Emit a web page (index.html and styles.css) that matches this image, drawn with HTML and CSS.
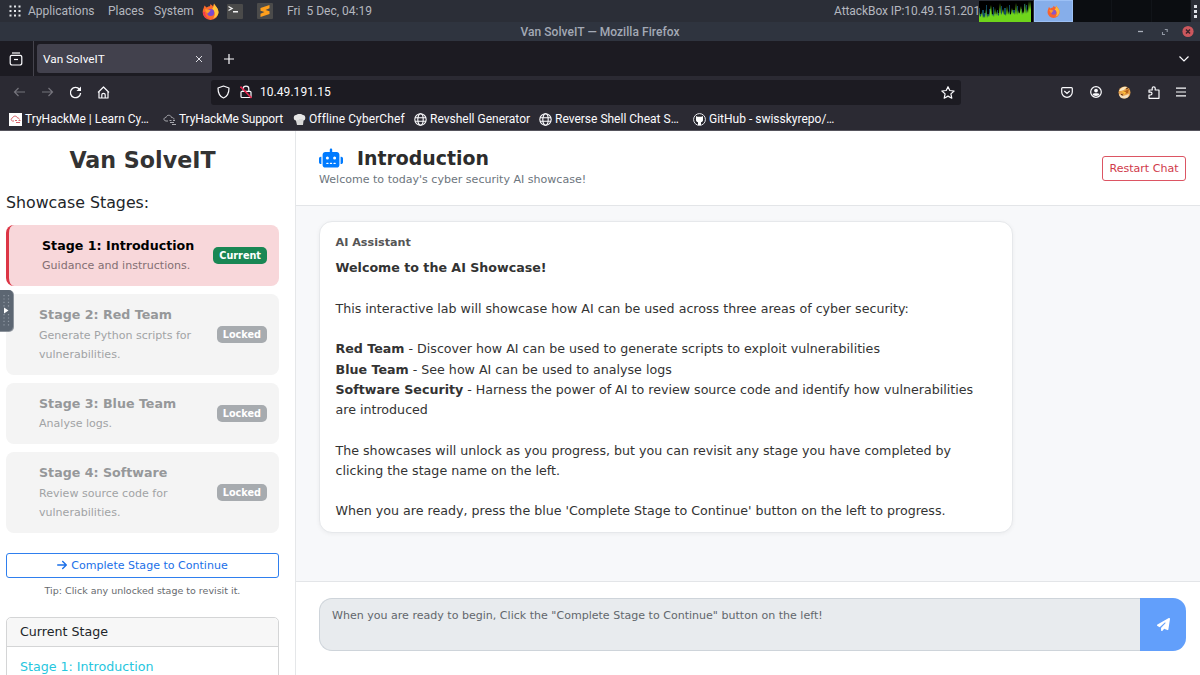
FILE: index.html
```html
<!DOCTYPE html>
<html lang="en">
  <head>
    <title>Van SolveIT</title>
    <meta charset="UTF-8">
    <meta name="viewport" content="width=device-width, initial-scale=1.0">
    <link rel="stylesheet" href="styles.css">
  </head>
  <body>

    <!-- desktop panel -->
    <div class="panel">
      <svg class="apps" width="12" height="12" viewBox="0 0 12 12" fill="#e4e6ea">
        <path d="M.5 .5h2v2h-2zM5 .5h2v2h-2zM9.500 .5h2v2h-2zM.5 5h2v2h-2zM5 5h2v2h-2zM9.500 5h2v2h-2zM.5 9.500h2v2h-2zM5 9.500h2v2h-2zM9.500 9.500h2v2h-2z"/>
      </svg>
      <span class="menu menu-apps">Applications</span>
      <span class="menu menu-places">Places</span>
      <span class="menu menu-system">System</span>
      <svg class="launch-fox" width="17" height="17" viewBox="0 0 17 17">
        <path d="M1.500 5.500L2.500 2.500 4.500 4.500C6 3.500 7 3.200 8 3.200L8.500 1C9.500 2 10.500 2.500 11 3.500L12 .5C13 3 16.500 5 16.500 9.500A7.800 7.300 0 0 1 .7 9.500C.7 8 1 6.500 1.500 5.500z" fill="#fb6a2c"/>
        <path d="M12 .5C13 3 16.500 5 16.500 9.500C16 13 13 15 11 15.500C14 12 13 8 10 6C11.500 4.500 12 2.500 12 .5z" fill="#ffc53a"/>
        <path d="M1 9c0 5 4 7.500 8 7.300C5 15.500 3 13 3 9z" fill="#f23a4e"/>
        <circle cx="8.700" cy="9.500" r="3.500" fill="#7a4ad0"/>
        <path d="M3 6.500C5 5.500 6 7 8.500 7.200 8.500 8.700 6.500 8.500 6 10.500 4.500 10 3.500 8.500 3 6.500z" fill="#ff9a2a"/>
      </svg>
      <svg class="launch-term" width="16" height="15" viewBox="0 0 16 15">
        <rect width="16" height="15" rx="1" fill="#4a4a4a"/>
        <path d="M1.500 2.500l3.500 2-3.500 2M6 7.800h5" fill="none" stroke="#f2f2f2" stroke-width="1.400"/>
      </svg>
      <svg class="launch-subl" width="16" height="16" viewBox="0 0 16 16">
        <rect width="16" height="16" rx="1" fill="#4b4b4b"/>
        <path d="M3.500 5l9-3v3.300L8.500 7l4 1.300V11l-9 3v-3.300L7.500 9l-4-1.300z" fill="#ff9f1c"/>
      </svg>
      <span class="menu menu-date">Fri&nbsp; 5 Dec, 04:19</span>
      <span class="menu menu-ip">AttackBox IP:10.49.151.201</span>
      <svg class="cpu" width="54" height="21" viewBox="0 0 54 21">
        <rect width="54" height="21" fill="#000"/>
        <path d="M0 21V7h1v6h2V9h2v3h2V4h1v9h2V8h2v5h2V6h1v7h3V9h1v3h3V5h1v8h2V7h2v6h3V4h1v9h2V9h3v4h2V5h1v7h3V8h1v4h2V3h1v9h1V4h1v17z" fill="#124a63"/>
        <path d="M0 21V11l1 5 1-1 1-4 1 6 1-2 1 2 1-9 1 9 1-3 1 2 1-5 1-7 1 11 1-2 1 3 1-9 1 8 1-5 1 5 1-1 1-12 1 12 1-2 1-4 1 6 1-1 1 2 1-10 1 9 1-4 1 4 1-1 1-6 1 6 1-2 1 3 1-12 1 12 1-5 1 4 1-2 1-6 1 9 1-4 1 3 1-11 1 11 1-5 1 4 1-12 1 9 1-9V21z" fill="#6fd51b"/>
      </svg>
      <div class="task">
        <svg width="13" height="13" viewBox="0 0 17 17">
          <path d="M1.500 5.500L2.500 2.500 4.500 4.500C6 3.500 7 3.200 8 3.200L8.500 1C9.500 2 10.500 2.500 11 3.500L12 .5C13 3 16.500 5 16.500 9.500A7.800 7.300 0 0 1 .7 9.500C.7 8 1 6.500 1.500 5.500z" fill="#f8622f"/>
          <path d="M12 .5C13 3 16.500 5 16.500 9.500C16 13 13 15 11 15.500C14 12 13 8 10 6C11.500 4.500 12 2.500 12 .5z" fill="#ffb83a"/>
          <circle cx="8.700" cy="9.500" r="3.300" fill="#8a55c8"/>
          <path d="M3 6.500C5 5.500 6 7 8.500 7.200 8.500 8.700 6.500 8.500 6 10.500 4.500 10 3.500 8.500 3 6.500z" fill="#ff9a2a"/>
        </svg>
      </div>
      <div class="workspaces"><i></i><i></i><i></i></div>
      <div class="dots"><i></i><i></i><i></i></div>
    </div>

    <!-- window title -->
    <div class="titlebar">
      <span></span>
      <span class="wtitle">Van SolveIT — Mozilla Firefox</span>
      <svg width="60" height="12" viewBox="0 0 60 12">
        <path d="M-2 5.500h5" stroke="#aab0bb" stroke-width="1.300"/>
        <path d="M22.500 6v2.500H25M24.800 3.500h2.400V6" fill="none" stroke="#9299a5" stroke-width="1.100"/>
        <circle cx="48" cy="5.500" r="5.600" fill="#cc575d"/>
        <path d="M46 3.500l4 4M50 3.500l-4 4" stroke="#3a2329" stroke-width="1.500"/>
      </svg>
    </div>

    <!-- tabs -->
    <div class="tabbar">
      <div class="tabview">
        <svg width="14" height="14" viewBox="0 0 14 14" fill="none" stroke="#fbfbfe" stroke-width="1.200">
          <path d="M3 1h8"/>
          <path d="M1.200 5.500c0-1.500.5-2.200 1.500-2.200h8.600c1 0 1.500.7 1.500 2.200V11c0 1.300-.7 2-2 2H3.200c-1.300 0-2-.7-2-2z"/>
          <path d="M5 7.500h4"/>
        </svg>
      </div>
      <div class="tab">
        <span>Van SolveIT</span>
        <svg width="8" height="8" viewBox="0 0 8 8" stroke="#dcdce2" stroke-width="1"><path d="M1 1l6 6M7 1L1 7"/></svg>
      </div>
      <svg class="newtab" width="10" height="10" viewBox="0 0 10 10" stroke="#fbfbfe" stroke-width="1.200"><path d="M5 0v10M0 5h10"/></svg>
      <svg class="alltabs" width="10" height="6" viewBox="0 0 10 6" fill="none" stroke="#fbfbfe" stroke-width="1.200"><path d="M.5.5L5 5 9.500.5"/></svg>
    </div>

    <!-- nav toolbar -->
    <div class="navbar">
      <div class="navbtns">
        <svg width="13" height="12" viewBox="0 0 13 12" fill="none" stroke="#75747c" stroke-width="1.200"><path d="M12 6H1.500M5.500 2l-4 4 4 4"/></svg>
        <svg width="13" height="12" viewBox="0 0 13 12" fill="none" stroke="#75747c" stroke-width="1.200"><path d="M1 6h10.500M7.500 2l4 4-4 4"/></svg>
        <svg width="13" height="13" viewBox="0 0 13 13"><path d="M10.600 3.500A5.100 5.100 0 1 0 11.600 7" fill="none" stroke="#fbfbfe" stroke-width="1.300"/><path d="M12 .5V5H7.500z" fill="#fbfbfe"/></svg>
        <svg width="13" height="13" viewBox="0 0 13 13" fill="none" stroke="#fbfbfe" stroke-width="1.200" stroke-linejoin="round"><path d="M1 6.500L6.500 1 12 6.500M2 5.500V12h9V5.500M4.800 12V8.800C4.800 7 8.200 7 8.200 8.800V12"/></svg>
      </div>
      <div class="urlbar">
        <svg width="13" height="14" viewBox="0 0 13 14" fill="none" stroke="#fbfbfe" stroke-width="1.200"><path d="M6.500 1L12 3c0 5-1.500 8.500-5.500 10C2.500 11.500 1 8 1 3z" stroke-linejoin="round"/></svg>
        <svg class="lock" width="12" height="14" viewBox="0 0 12 14" fill="none" stroke="#fbfbfe" stroke-width="1.200">
          <path d="M3.200 6V3.500C3.200.4 8.800.4 8.800 3.500V6M2 6.300h8c.6 0 1 .4 1 1v4.200c0 .6-.4 1-1 1H2c-.6 0-1-.4-1-1V7.300c0-.6.400-1 1-1z"/>
          <path d="M.5 1.500l11 11.500" stroke="#e22850" stroke-width="1.600"/>
        </svg>
        <span class="url">10.49.191.15</span>
        <svg class="star" width="14" height="13" viewBox="0 0 14 13" fill="none" stroke="#fbfbfe" stroke-width="1.200" stroke-linejoin="round"><path d="M7 .7l1.800 3.800 4.300.5-3.200 2.900.9 4.300L7 10.100l-3.800 2.100.9-4.300L.9 5l4.300-.5z"/></svg>
      </div>
      <div class="toolicons">
        <svg width="12" height="11" viewBox="0 0 12 11" fill="none" stroke="#fbfbfe" stroke-width="1.200"><path d="M1.600.7h8.800c.5 0 .9.4.9.9V5a5.300 5.300 0 0 1-10.600 0V1.600c0-.5.400-.9.900-.9zM3.300 4L6 6.500 8.700 4"/></svg>
        <svg width="12" height="12" viewBox="0 0 12 12"><circle cx="6" cy="6" r="5.300" fill="none" stroke="#fbfbfe" stroke-width="1.200"/><circle cx="6" cy="4.600" r="1.900" fill="#fbfbfe"/><path d="M2.600 8c0-1 6.800-1 6.800 0S8 10 6 10 2.600 9 2.600 8z" fill="#fbfbfe"/></svg>
        <svg width="13" height="13" viewBox="0 0 13 13"><circle cx="6.500" cy="6.500" r="6" fill="#e6a04a"/><path d="M1 5c1-3 5-5 8-4L6 4 3 5z" fill="#fbe8c0"/><path d="M1 8l4 2 6-2c0 3-2 4.500-5 4.500S1.500 11 1 8z" fill="#f4dfc0"/><path d="M5 6l6-3-1 4-4 1z" fill="#b8631a"/><path d="M3 5l5 1-1 2.500z" fill="#ffc23c"/><path d="M3 8.500l2 .5M8 3l2-1" stroke="#5a2c10"/></svg>
        <svg width="12" height="13" viewBox="0 0 12 13" fill="none" stroke="#fbfbfe" stroke-width="1.200" stroke-linejoin="round"><path d="M1 12.300V9h1.500c2 0 2-2.800 0-2.800H1V4h3.200V2.300c0-2 3-2 3 0V4H11v8.300z"/></svg>
        <svg width="10" height="10" viewBox="0 0 10 10" stroke="#fbfbfe" stroke-width="1.200"><path d="M0 1.200h10M0 5h10M0 8.800h10"/></svg>
      </div>
    </div>

    <!-- bookmarks -->
    <div class="bookmarks">
      <div class="bm bm1">
        <svg width="13" height="13" viewBox="0 0 13 13"><rect width="13" height="13" fill="#fff"/><path d="M5 8H3.500C1.500 7.500 2 5 3.500 5 4 2.500 8 2.500 8.500 5 10 5 10.500 6 10.500 6.500M6 7.500h2M9.500 7.500h2M7 9.500h4" fill="none" stroke="#d0525a" stroke-width=".9"/></svg>
        <span>TryHackMe | Learn Cy…</span>
      </div>
      <div class="bm bm2">
        <svg width="13" height="13" viewBox="0 0 13 13" fill="none" stroke="#a7a7ad"><path d="M5 8H3C0 7.500.5 4.500 3 4.500 3.500 1.500 8 1.500 8.500 4.500c1.500 0 2.500.5 2.500 2M6.500 7.500h2M10 7.500h2M7 9.500h4M9 11.500h4"/></svg>
        <span>TryHackMe Support</span>
      </div>
      <div class="bm bm3">
        <svg width="13" height="13" viewBox="0 0 13 13"><path d="M3 7.500C0 7.500 0 2 3 2 4 .5 9 .5 10 2c3 0 3 5.500.5 5.500L10 12H4z" fill="#e6e6e6"/><path d="M5 7v5M7 6v6M9 6v6" stroke="#bbb" stroke-width=".7"/></svg>
        <span>Offline CyberChef</span>
      </div>
      <div class="bm bm4">
        <svg width="13" height="13" viewBox="0 0 13 13" fill="none" stroke="#fbfbfe" stroke-width="1.100"><circle cx="6.500" cy="6.500" r="5.700"/><ellipse cx="6.500" cy="6.500" rx="2.700" ry="5.700"/><path d="M1 4.700h11M1 8.300h11"/></svg>
        <span>Revshell Generator</span>
      </div>
      <div class="bm bm5">
        <svg width="13" height="13" viewBox="0 0 13 13" fill="none" stroke="#fbfbfe" stroke-width="1.100"><circle cx="6.500" cy="6.500" r="5.700"/><ellipse cx="6.500" cy="6.500" rx="2.700" ry="5.700"/><path d="M1 4.700h11M1 8.300h11"/></svg>
        <span>Reverse Shell Cheat S…</span>
      </div>
      <div class="bm bm6">
        <svg width="13" height="13" viewBox="0 0 13 13"><circle cx="6.500" cy="6.500" r="5.900" fill="#24242b" stroke="#e8e8ee" stroke-width="1"/><path d="M3 3l1.500.8h4L10 3v4c0 1.500-1 2-2 2.200V12H5V9.200C4 9 3 8.500 3 7z" fill="#fff"/></svg>
        <span>GitHub - swisskyrepo/…</span>
      </div>
    </div>

    <div class="page">
      <aside class="sidebar">
        <h2 class="brand">Van SolveIT</h2>
        <h5 class="stages-title">Showcase Stages:</h5>

        <div class="stage current">
          <div class="stage-text">
            <strong>Stage 1: Introduction</strong>
            <small>Guidance and instructions.</small>
          </div>
          <span class="badge">Current</span>
        </div>
        <div class="stage locked">
          <div class="stage-text">
            <strong>Stage 2: Red Team</strong>
            <small>Generate Python scripts for vulnerabilities.</small>
          </div>
          <span class="badge">Locked</span>
        </div>
        <div class="stage locked">
          <div class="stage-text">
            <strong>Stage 3: Blue Team</strong>
            <small>Analyse logs.</small>
          </div>
          <span class="badge">Locked</span>
        </div>
        <div class="stage locked">
          <div class="stage-text">
            <strong>Stage 4: Software</strong>
            <small>Review source code for vulnerabilities.</small>
          </div>
          <span class="badge">Locked</span>
        </div>

        <button class="complete">
          <svg width="10" height="12" viewBox="0 0 448 512" fill="currentColor"><path d="M438.600 278.600c12.500-12.500 12.500-32.800 0-45.300l-160-160c-12.500-12.500-32.800-12.500-45.300 0s-12.500 32.800 0 45.300L338.800 224 32 224c-17.700 0-32 14.300-32 32s14.300 32 32 32l306.700 0L233.400 393.400c-12.500 12.500-12.500 32.800 0 45.300s32.800 12.500 45.300 0l160-160z"/></svg>
          <span>Complete Stage to Continue</span>
        </button>
        <p class="tip">Tip: Click any unlocked stage to revisit it.</p>

        <div class="card">
          <div class="card-header">Current Stage</div>
          <div class="card-body">Stage 1: Introduction</div>
        </div>
      </aside>

      <main class="chat">
        <header class="chat-header">
          <div>
            <h4 class="chat-title">
              <svg width="24" height="20" viewBox="0 0 640 512" fill="#007bff"><path d="M320 0c17.700 0 32 14.300 32 32l0 64 120 0c39.800 0 72 32.200 72 72l0 272c0 39.800-32.200 72-72 72l-304 0c-39.800 0-72-32.200-72-72l0-272c0-39.800 32.200-72 72-72l120 0 0-64c0-17.700 14.300-32 32-32zM208 384c-8.800 0-16 7.200-16 16s7.200 16 16 16l32 0c8.800 0 16-7.200 16-16s-7.200-16-16-16l-32 0zm96 0c-8.800 0-16 7.200-16 16s7.200 16 16 16l32 0c8.800 0 16-7.200 16-16s-7.200-16-16-16l-32 0zm96 0c-8.800 0-16 7.200-16 16s7.200 16 16 16l32 0c8.800 0 16-7.200 16-16s-7.200-16-16-16l-32 0zM264 256a40 40 0 1 0 -80 0 40 40 0 1 0 80 0zm152 40a40 40 0 1 0 0-80 40 40 0 1 0 0 80zM48 224l16 0 0 192-16 0c-26.500 0-48-21.500-48-48l0-96c0-26.500 21.500-48 48-48zm544 0c26.500 0 48 21.500 48 48l0 96c0 26.500-21.500 48-48 48l-16 0 0-192 16 0z"/></svg>
              <span>Introduction</span>
            </h4>
            <p class="chat-sub">Welcome to today's cyber security AI showcase!</p>
          </div>
          <button class="restart">Restart Chat</button>
        </header>

        <section class="messages">
          <div class="message">
            <div class="sender">AI Assistant</div>
            <strong>Welcome to the AI Showcase!</strong><br>
            <br>
            This interactive lab will showcase how AI can be used across three areas of cyber security:<br>
            <br>
            <strong>Red Team</strong> - Discover how AI can be used to generate scripts to exploit vulnerabilities<br>
            <strong>Blue Team</strong> - See how AI can be used to analyse logs<br>
            <strong>Software Security</strong> - Harness the power of AI to review source code and identify how vulnerabilities are introduced<br>
            <br>
            The showcases will unlock as you progress, but you can revisit any stage you have completed by clicking the stage name on the left.<br>
            <br>
            When you are ready, press the blue 'Complete Stage to Continue' button on the left to progress.
          </div>
        </section>

        <footer class="composer">
          <div class="input">When you are ready to begin, Click the "Complete Stage to Continue" button on the left!</div>
          <button class="send">
            <svg width="13" height="13" viewBox="0 0 512 512" fill="#fff"><path d="M498.100 5.600c10.100 7 15.400 19.100 13.500 31.200l-64 416c-1.500 9.700-7.400 18.200-16 23s-18.900 5.400-28 1.600L284 427.700l-68.500 74.100c-8.900 9.700-22.900 12.900-35.200 8.100S160 493.200 160 480V396.400c0-4 1.500-7.800 4.200-10.700L331.800 202.800c5.800-6.300 5.600-16-.4-22s-15.700-6.400-22-.7L106 360.800 17.700 316.600C7.100 311.300 .3 300.700 0 288.900s5.900-22.800 16.100-28.700l448-256c10.700-6.100 23.900-5.500 34 1.400z"/></svg>
          </button>
        </footer>
      </main>
    </div>

    <!-- side handle of the remote desktop -->
    <svg class="handle" width="14" height="42" viewBox="0 0 14 42">
      <path d="M0 0h9a5 5 0 0 1 5 5v32a5 5 0 0 1-5 5H0z" fill="#8d949c"/>
      <path d="M0 0h8.500a4.500 4.500 0 0 1 4.500 4.500v32a4.500 4.500 0 0 1-4.500 4.500H0z" fill="#5c6672"/>
      <path d="M4 5v12M8.500 5v12M4 24v13M8.500 24v13" stroke="#8f98a3" stroke-width="1.200" stroke-dasharray="1.200 2.200"/>
      <path d="M4 17.500l4.500 3-4.500 3z" fill="#fff"/>
    </svg>

  </body>
</html>
```

FILE: styles.css
```css
* {
  box-sizing: border-box;
}

body {
  margin: 0;
  width: 1200px;
  height: 675px;
  overflow: hidden;
  display: flex;
  flex-direction: column;
  font-family: "DejaVu Sans", sans-serif;
  color: #212529;
  background: #fff;
}

h2, h4, h5, p {
  margin: 0;
}

svg {
  display: block;
  flex: none;
}

button {
  font-family: inherit;
  background: none;
  border: none;
  padding: 0;
}

/* desktop panel */
.panel {
  height: 22px;
  flex: none;
  display: flex;
  align-items: center;
  background: #2b2e37;
  font-family: Roboto, sans-serif;
  font-size: 12px;
  color: #b4b7bf;
  white-space: nowrap;
}

.apps { margin-left: 9px; }
.menu-apps { width: 80px; margin-left: 7px; }
.menu-places { width: 46px; }
.menu-system { width: 48px; }
.launch-term { margin-left: 8px; }
.launch-subl { margin-left: 14px; }
.menu-date { margin-left: 14px; }

.menu-ip {
  margin-left: auto;
  width: 144px;
  letter-spacing: -.08px;
}

.cpu { margin-left: 1px; }

.task {
  width: 39px;
  height: 22px;
  margin-left: 1px;
  background: #86aeea;
  border: 1px solid #9cc0f5;
  display: flex;
  align-items: center;
  justify-content: center;
}

.workspaces {
  display: flex;
  width: 118px;
  height: 22px;
  background: #0b0d11;
}

.workspaces i {
  flex: 1;
  border-right: 1px solid #111419;
}

.dots {
  width: 9px;
  display: flex;
  flex-direction: column;
  align-items: center;
  gap: 2px;
}

.dots i {
  width: 3px;
  height: 3px;
  background: #dfe2e8;
}

/* window title */
.titlebar {
  height: 19px;
  flex: none;
  display: grid;
  grid-template-columns: 60px 1fr 60px;
  align-items: center;
  background: #2f343f;
}

.titlebar svg { overflow: visible; }

.wtitle {
  text-align: center;
  font: 500 12px Roboto, sans-serif;
  letter-spacing: .05px;
  color: #a3a9b5;
}

/* tabs */
.tabbar {
  height: 35px;
  flex: none;
  display: flex;
  align-items: center;
  background: #1c1b22;
  font-family: Roboto, sans-serif;
  color: #fbfbfe;
}

.tabview {
  width: 34px;
  height: 35px;
  padding-left: 9px;
  display: flex;
  align-items: center;
  border-right: 1px solid #45444d;
}

.tab {
  width: 175px;
  height: 29px;
  margin-left: 3px;
  padding: 0 9px 0 6px;
  border-radius: 3px;
  background: #42414d;
  display: flex;
  align-items: center;
  justify-content: space-between;
  font-size: 11.8px;
}

.newtab { margin-left: 12px; }
.alltabs { margin-left: auto; margin-right: 11px; }

/* nav toolbar */
.navbar {
  height: 32px;
  flex: none;
  display: flex;
  align-items: center;
  background: #2b2a33;
}

.navbtns {
  width: 211px;
  padding-left: 12.5px;
  display: flex;
  align-items: center;
  gap: 15.3px;
}

.urlbar {
  width: 750px;
  height: 25px;
  padding: 0 6px;
  border-radius: 3px;
  background: #1c1b22;
  display: flex;
  align-items: center;
}

.lock { margin-left: 10px; }

.url {
  margin-left: 8px;
  font: 12px Roboto, sans-serif;
  letter-spacing: .05px;
  color: #fbfbfe;
}

.star { margin-left: auto; }

.toolicons {
  flex: 1;
  padding: 0 14px 0 100px;
  display: flex;
  align-items: center;
  justify-content: space-between;
}

/* bookmarks */
.bookmarks {
  height: 23px;
  flex: none;
  display: flex;
  align-items: center;
  padding-left: 9px;
  background: #2b2a33;
  border-bottom: 1px solid #55545c;
  font-family: Roboto, sans-serif;
  font-size: 12px;
  color: #fbfbfe;
  white-space: nowrap;
}

.bm {
  display: flex;
  align-items: center;
  gap: 3px;
}

.bm1 { width: 154px; }
.bm2 { width: 130px; letter-spacing: -.12px; }
.bm3 { width: 121px; letter-spacing: .1px; }
.bm4 { width: 125px; }
.bm5 { width: 154px; }

/* page */
.page {
  flex: 1;
  min-height: 0;
  display: flex;
}

.sidebar {
  width: 296px;
  flex: none;
  padding: 14px 16px 0 6px;
  border-right: 1px solid #e5e7e9;
  overflow: hidden;
}

.brand {
  font-size: 22.2px;
  line-height: 30px;
  text-align: center;
  color: #333;
}

.stages-title {
  margin-top: 18px;
  font-size: 15.8px;
  line-height: 20px;
  font-weight: 400;
}

.stage {
  display: flex;
  align-items: center;
  justify-content: space-between;
  padding: 10.75px 12px 10.75px 33px;
  margin-bottom: 8.2px;
  border-radius: 8px;
  background: #f4f4f4;
}

.current {
  margin-top: 12px;
  border-left: 3px solid #dc3545;
  background: #f8d7da;
}

.stage-text {
  display: flex;
  flex-direction: column;
  max-width: 160px;
}

.stage strong {
  font-size: 12.65px;
  line-height: 20.5px;
  white-space: nowrap;
}

.stage small {
  font-size: 11.05px;
  line-height: 19.2px;
}

.current strong { color: #000; }
.current small { color: #836f73; }
.locked strong { color: #96989a; }
.locked small { color: #a1a3a5; }

.badge {
  padding: 0 6px;
  border-radius: 5px;
  font-size: 9.7px;
  line-height: 17px;
  font-weight: 700;
  color: #fff;
  background: #a7abaf;
}

.current .badge { background: #198754; }

.complete {
  width: 100%;
  height: 25px;
  margin-top: 20px;
  border: 1px solid #2f7fee;
  border-radius: 3px;
  color: #1a6fe8;
  font-size: 11.05px;
  display: flex;
  align-items: center;
  justify-content: center;
  gap: 4px;
}

.tip {
  margin-top: 5px;
  font-size: 9.5px;
  line-height: 16px;
  text-align: center;
  color: #666a6e;
}

.card {
  margin-top: 18px;
  height: 120px;
  border: 1px solid #d4d5d6;
  border-radius: 5px;
}

.card-header {
  height: 29px;
  padding-left: 13px;
  font-size: 12.65px;
  line-height: 28px;
  background: #f7f7f7;
  border-bottom: 1px solid #d4d5d6;
  border-radius: 5px 5px 0 0;
}

.card-body {
  padding: 10px 13px;
  font-size: 12.65px;
  line-height: 20px;
  color: #26c6de;
}

/* chat */
.chat {
  flex: 1;
  display: flex;
  flex-direction: column;
  background: #f7f8fa;
}

.chat-header {
  height: 75px;
  flex: none;
  padding: 0 14px 0 23px;
  display: flex;
  align-items: center;
  justify-content: space-between;
  background: #fff;
  border-bottom: 1px solid #e3e5e8;
}

.chat-title {
  display: flex;
  align-items: center;
  gap: 14px;
  font-size: 18.9px;
  line-height: 24px;
  color: #2c2c2c;
}

.chat-sub {
  font-size: 11.05px;
  line-height: 20px;
  color: #6c757d;
}

.restart {
  width: 84px;
  height: 25px;
  border: 1px solid #dc5563;
  border-radius: 3px;
  color: #d0394a;
  font-size: 11.05px;
}

.messages {
  flex: 1;
  padding: 15px 23px;
}

.message {
  width: 694px;
  height: 312px;
  padding: 11px 30px 0 15.5px;
  border: 1px solid #e6e8eb;
  border-radius: 13px;
  background: #fff;
  box-shadow: 0 1px 4px rgba(0, 0, 0, .05);
  font-size: 12.65px;
  line-height: 20.25px;
  color: #333;
}

.sender {
  margin-bottom: 5px;
  font-size: 11.2px;
  font-weight: 700;
  color: #555;
}

.composer {
  height: 94px;
  flex: none;
  padding: 16px 14px 0 23px;
  display: flex;
  background: #fff;
  border-top: 1px solid #e3e5e8;
}

.input {
  flex: 1;
  height: 53px;
  padding: 8px 12px;
  border: 1px solid #ced4da;
  border-right: none;
  border-radius: 13px 0 0 13px;
  background: #e8ebee;
  font-size: 11.05px;
  line-height: 18px;
  color: #62676c;
}

.send {
  width: 46px;
  height: 53px;
  border-radius: 0 13px 13px 0;
  background: #629ffb;
  display: flex;
  align-items: center;
  justify-content: center;
}

/* lies over the page edge */
.handle {
  position: absolute;
  left: 0;
  top: 290px;
}
```
